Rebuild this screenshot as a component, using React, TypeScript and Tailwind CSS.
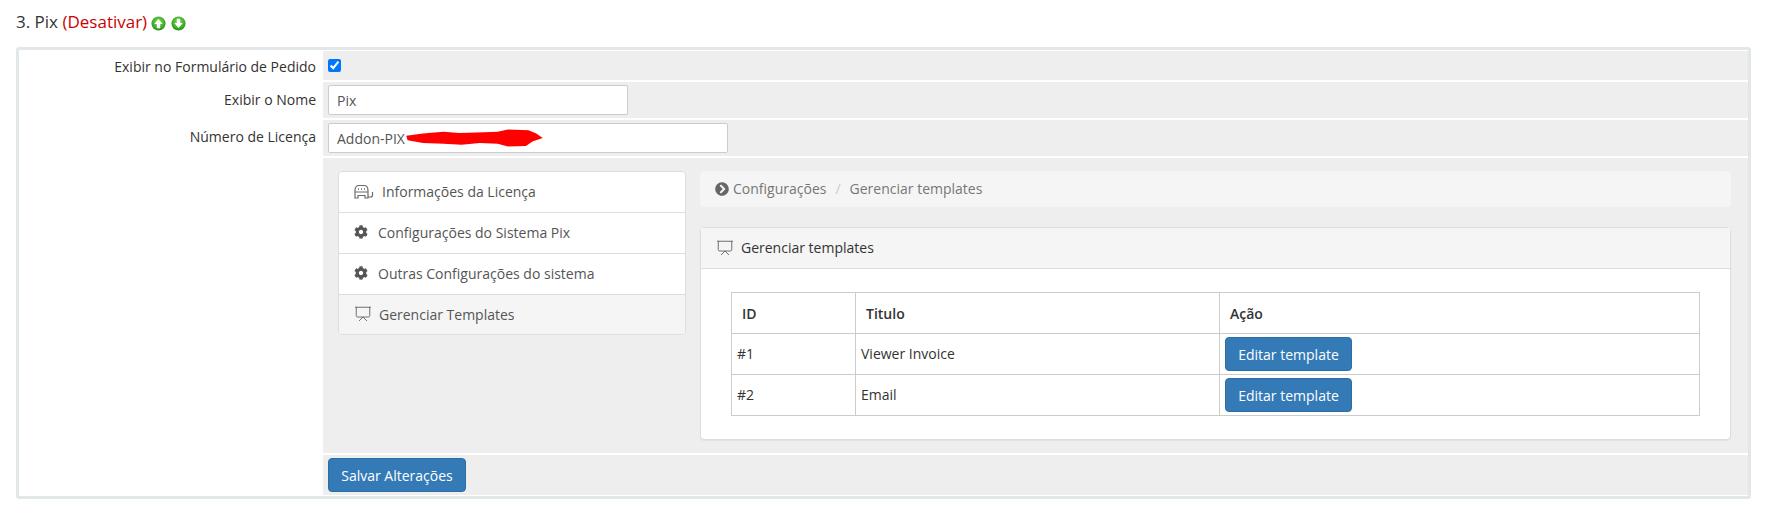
import { FaChevronCircleRight, FaCog } from 'react-icons/fa'
import { Presentation } from 'lucide-react'

function GreenArrow({ down }: { down?: boolean }) {
  return (
    <svg width="15" height="15" viewBox="0 0 16 16" className="shrink-0">
      <defs>
        <radialGradient id={down ? 'gd' : 'gu'} cx="50%" cy="40%" r="60%">
          <stop offset="0%" stopColor="#8fe05a" />
          <stop offset="70%" stopColor="#3fae2a" />
          <stop offset="100%" stopColor="#23861c" />
        </radialGradient>
      </defs>
      <circle cx="8" cy="8" r="7.5" fill={`url(#${down ? 'gd' : 'gu'})`} />
      <path
        d={down ? 'M6.2 3h3.6v4.4h2.7L8 12.8 3.5 7.4h2.7z' : 'M6.2 13h3.6V8.6h2.7L8 3.2 3.5 8.6h2.7z'}
        fill="#fff"
      />
    </svg>
  )
}

function LicenseIcon() {
  return (
    <svg width="20" height="16" viewBox="0 0 20 16" fill="none" stroke="#6b6b6b" strokeWidth="1.2" className="shrink-0">
      <path d="M1 14V6.5C1 3 3 1.5 5 1.5h5c2 0 4 1.5 4 5V14h-3v-2.5H4V14z" />
      <path d="M1 8h13" />
      <path d="M4 5h1M7 5h1M10 5h1" strokeWidth="1.6" />
      <path d="M14 13h2.5c1.2 0 2-.8 2-2V8" />
    </svg>
  )
}

function Row({
  label,
  labelClass,
  children,
  className,
}: {
  label?: string
  labelClass?: string
  children: React.ReactNode
  className?: string
}) {
  return (
    <div className="flex gap-px">
      <div className={`w-[303px] shrink-0 pr-[6px] text-right text-[14px] leading-[20px] text-[#333] ${labelClass ?? ''}`}>{label}</div>
      <div className={`flex-1 bg-[#eeeeee] ${className ?? ''}`}>{children}</div>
    </div>
  )
}

const menu = [
  { text: 'Informações da Licença', icon: <LicenseIcon />, gap: 'gap-[8px]', size: 'h-[40px] pb-px' },
  { text: 'Configurações do Sistema Pix', icon: <FaCog className="h-[14px] w-[14px] text-[#555]" />, gap: 'gap-[10px]', size: 'h-[41px] pb-[2px]' },
  { text: 'Outras Configurações do sistema', icon: <FaCog className="h-[14px] w-[14px] text-[#555]" />, gap: 'gap-[10px]', size: 'h-[41px] pb-[2px]' },
  { text: 'Gerenciar Templates', icon: <Presentation size={18} strokeWidth={1.1} className="text-[#555]" />, gap: 'gap-[7px]', size: 'h-[41px] pb-[2px]', active: true },
]

const rows = [
  { id: '#1', title: 'Viewer Invoice' },
  { id: '#2', title: 'Email' },
]

export default function App() {
  return (
    <div className="h-[517px] overflow-hidden bg-white pl-4 pr-[15px] font-['Open_Sans',sans-serif] text-[14px] text-[#333]">
      <div className="flex h-[47px] items-start gap-[4px] pt-[11px]">
        <h3 className="text-[17px] leading-[22px] text-[#333]">
          3. Pix <a className="text-[#cc0000]">(Desativar)</a>
        </h3>
        <div className="mt-[5px] flex gap-[5px]">
          <GreenArrow />
          <GreenArrow down />
        </div>
      </div>

      <div className="flex flex-col gap-[2px] rounded-[3px] border-[3px] border-[#e2e7e9] pt-px pb-px">
        <Row label="Exibir no Formulário de Pedido" labelClass="pt-[6px]" className="h-[29px] pl-[5px] pt-[8px]">
          <input type="checkbox" defaultChecked className="block h-[13px] w-[13px] accent-[#0075ff]" />
        </Row>
        <Row label="Exibir o Nome" labelClass="pt-[8px]" className="h-[36px] pl-[5px] pt-[3px]">
          <input
            defaultValue="Pix"
            className="h-[30px] w-[300px] rounded-[2px] border border-[#cccccc] bg-white px-[8px] text-[14px] text-[#555] outline-none"
          />
        </Row>
        <Row label="Número de Licença" labelClass="pt-[7px]" className="h-[36px] pl-[5px] pt-[3px]">
          <div className="relative w-[400px]">
            <input
              defaultValue="Addon-PIX"
              className="h-[30px] w-full rounded-[2px] border border-[#cccccc] bg-white px-[8px] text-[14px] text-[#555] outline-none"
            />
            <svg width="139" height="18" viewBox="0 0 108 16" preserveAspectRatio="none" className="absolute left-[77px] top-[6px]">
              <path
                d="M1 6 L14 4 L30 2.5 L42 3.5 L56 3 L72 2.5 L80 0.5 L96 1 L102 4 L107 8 L99 11 L94 15 L80 15.5 L72 13 L58 12.5 L44 14 L30 13 L14 12.5 L2 10 Z"
                fill="#ff0000"
              />
            </svg>
          </div>
        </Row>
        <Row className="flex h-[295px] gap-[14px] pl-[15px] pr-[17px] pt-[13px]">
          <div className="h-[164px] w-[348px] shrink-0 overflow-hidden rounded-[4px] border border-[#dddddd] bg-white">
            {menu.map((m, i) => (
              <div
                key={m.text}
                className={`flex items-center px-[15px] text-[14px] text-[#555] ${m.size} ${m.gap} ${
                  i > 0 ? 'border-t border-[#dddddd]' : ''
                } ${m.active ? 'bg-[#f5f5f5]' : ''}`}
              >
                {m.icon}
                <span>{m.text}</span>
              </div>
            ))}
          </div>

          <div className="flex-1">
            <div className="flex h-[36px] items-center rounded-[4px] bg-[#f5f5f5] px-[15px] pb-px text-[14px] text-[#777]">
              <FaChevronCircleRight className="mr-[4px] h-[14px] w-[14px] text-[#666]" />
              <span>Configurações</span>
              <span className="px-[9px] text-[#ccc]">/</span>
              <span>Gerenciar templates</span>
            </div>

            <div className="mt-[20px] rounded-[4px] border border-[#dddddd] bg-white shadow-[0_1px_1px_rgba(0,0,0,0.05)]">
              <div className="flex h-[41px] items-center gap-[7px] border-b border-[#dddddd] bg-[#f5f5f5] px-[15px] pb-px text-[14px] text-[#333]">
                <Presentation size={18} strokeWidth={1.1} className="text-[#555]" />
                <span>Gerenciar templates</span>
              </div>
              <div className="px-[30px] py-[23px]">
                <table className="w-full table-fixed border-collapse border border-[#cccccc] text-[14px]">
                  <thead>
                    <tr className="h-[41px]">
                      <th className="w-[124px] border border-[#cccccc] px-[10px] text-left font-semibold">ID</th>
                      <th className="w-[364px] border border-[#cccccc] px-[10px] text-left font-semibold">Titulo</th>
                      <th className="border border-[#cccccc] px-[10px] text-left font-semibold">Ação</th>
                    </tr>
                  </thead>
                  <tbody>
                    {rows.map((r) => (
                      <tr key={r.id} className="h-[41px]">
                        <td className="border border-[#cccccc] px-[5px] pb-px">{r.id}</td>
                        <td className="border border-[#cccccc] px-[5px] pb-px">{r.title}</td>
                        <td className="border border-[#cccccc] px-[5px]">
                          <button className="block h-[34px] w-[127px] rounded-[4px] border border-[#2e6da4] bg-[#337ab7] text-[14px] text-white">
                            Editar template
                          </button>
                        </td>
                      </tr>
                    ))}
                  </tbody>
                </table>
              </div>
            </div>
          </div>
        </Row>
        <Row className="h-[40px] pl-[5px] pt-[3px]">
          <button className="h-[34px] w-[138px] rounded-[4px] border border-[#2e6da4] bg-[#337ab7] text-[14px] text-white">
            Salvar Alterações
          </button>
        </Row>
      </div>
    </div>
  )
}
